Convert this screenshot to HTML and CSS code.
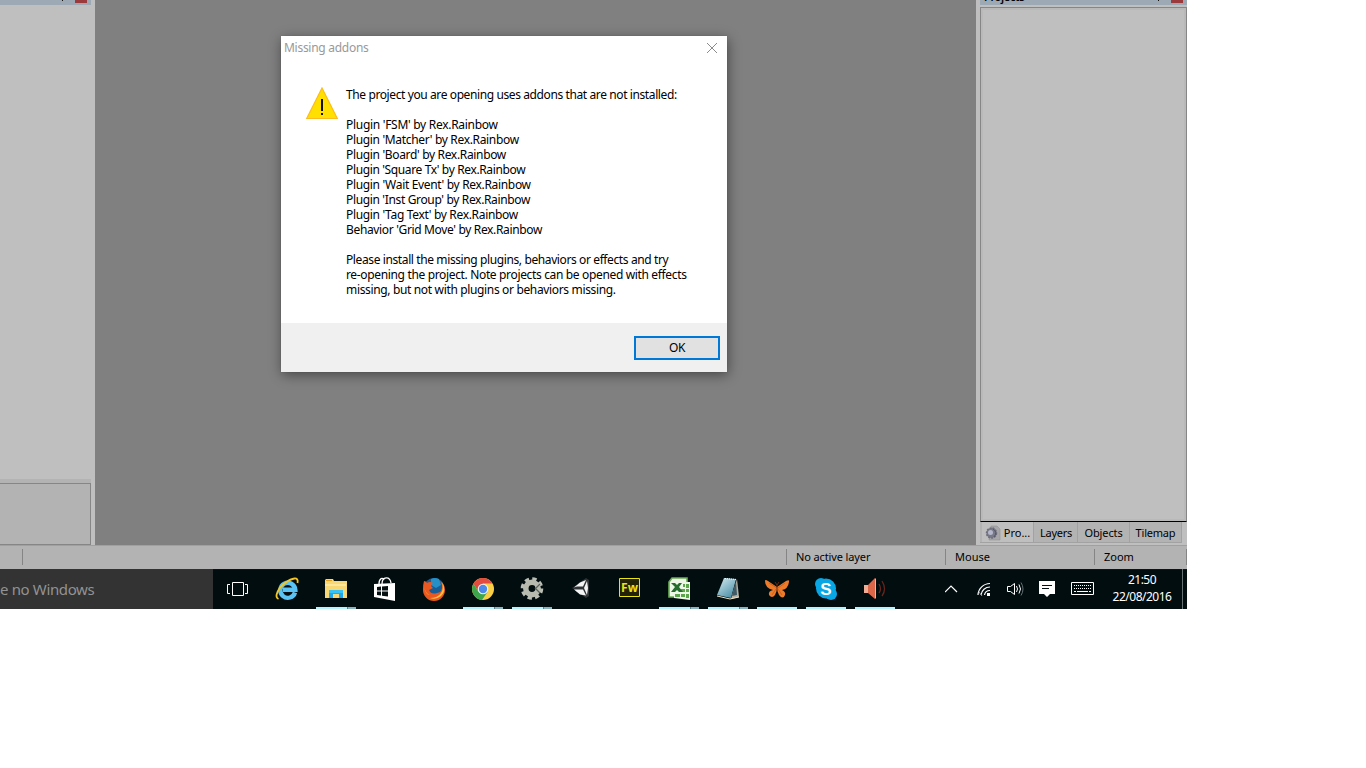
FILE: index.html
```
<!DOCTYPE html>
<html lang="pt">
<head>
<meta charset="utf-8">
<title>Missing addons</title>
<link rel="stylesheet" href="styles.css">
</head>
<body>
<div class="screen">
  <main class="workspace">
    <aside class="left-dock">
      <div class="dock-title"><i class="pin"></i><i class="dock-close"></i></div>
      <div class="left-list"></div>
      <div class="left-info"></div>
    </aside>
    <section class="canvas">
      <div class="dialog">
        <header class="dialog-title"><span>Missing addons</span>
          <svg width="12" height="12" viewBox="0 0 12 12"><path d="M1 1L11 11M11 1L1 11" stroke="#8c8c8c" fill="none"/></svg>
        </header>
        <div class="dialog-body">
          <svg class="warning" width="32" height="33" viewBox="0 0 32 33"><path d="M16 1L31.3 31.5H.7Z" fill="#ffe000" stroke="#fdbb20" stroke-width="1.2"/><path d="M15 12h2v12h-2zM15 26h2v2h-2z" fill="#111"/></svg>
          <div class="message">
            <p><span class="l1">The project you are opening uses addons that are not installed:</span></p>
            <p class="list"><span class="l2">Plugin 'FSM' by Rex.Rainbow</span><span class="l3">Plugin 'Matcher' by Rex.Rainbow</span><span class="l4">Plugin 'Board' by Rex.Rainbow</span><span class="l5">Plugin 'Square Tx' by Rex.Rainbow</span><span class="l6">Plugin 'Wait Event' by Rex.Rainbow</span><span class="l7">Plugin 'Inst Group' by Rex.Rainbow</span><span class="l8">Plugin 'Tag Text' by Rex.Rainbow</span><span class="l9">Behavior 'Grid Move' by Rex.Rainbow</span></p>
            <p><span class="l10">Please install the missing plugins, behaviors or effects and try</span><span class="l11">re-opening the project. Note projects can be opened with effects</span><span class="l12">missing, but not with plugins or behaviors missing.</span></p>
          </div>
        </div>
        <footer class="dialog-footer"><button class="ok">OK</button></footer>
      </div>
    </section>
    <aside class="right-dock">
      <div class="dock-title"><span class="dock-name">Projects</span><i class="pin"></i><i class="dock-close"></i></div>
      <div class="tree"></div>
      <nav class="tabs">
        <span class="tab active"><svg width="16" height="16" viewBox="0 0 16 16"><path d="M6 1h6l3 3v11H4z" fill="#a7a7a9" stroke="#929296" stroke-width=".6"/><circle cx="6.500" cy="8" r="5" fill="#777987" stroke="#6d6d7c" stroke-dasharray="2 1" stroke-width="1.500"/><circle cx="5.500" cy="7.500" r="2.500" fill="#b5b7cb"/><path d="M8 4q5 3 1 8" stroke="#56566a" fill="none"/></svg><b>Pro...</b></span>
        <span class="tab layers">Layers</span><span class="tab objects">Objects</span><span class="tab tilemap">Tilemap</span>
      </nav>
    </aside>
  </main>
  <div class="status">
    <span class="cell s0"></span><span class="cell s1"></span><span class="cell s2">No active layer</span><span class="cell s3">Mouse</span><span class="cell s4">Zoom</span>
  </div>
  <footer class="taskbar">
    <div class="search">e no Windows</div>
    <div class="apps">
      <div class="app"><svg viewBox="0 0 24 24"><path d="M6.500 5.500h11v13h-11zM4 7.500H1.500v9H4M19 7.500h2.500v9H19" fill="none" stroke="#fff"/></svg></div>
      <div class="app"><svg viewBox="0 0 24 24"><path d="M20 15.500A7.500 7.500 0 1 1 20.300 12.700H8" fill="none" stroke="#5bc3f3" stroke-width="4.400"/><path d="M3.500 22C-1 20 3 11 10 6S24-1 22.500 6" fill="none" stroke="#f5c623" stroke-width="1.800"/></svg></div>
      <div class="app on multi"><svg viewBox="0 0 24 24"><path d="M1 3l1-1h7l1 2h13v17H1z" fill="#f8d775"/><path d="M2 3h6v1H2z" fill="#e99d17"/><path d="M1 7h21v2H1z" fill="#ffe69b"/><path d="M5 21v-8h14v8h-4v-4H9v4z" fill="#1fa7e8"/><path d="M5 13h14v3H5z" fill="#37c3f5"/></svg></div>
      <div class="app"><svg viewBox="0 0 24 24"><path d="M1 7l21-1v18L1 20z" fill="#fff"/><path d="M6 7C6 1 10 0 11 3M9 7C9-1 17-1 18 6" fill="none" stroke="#fff" stroke-width="1.300"/><path d="M4 10l4-.4v4H4zM9 9.500l6-.6v4.700H9zM4 14.600h4v4L4 18zM9 14.600h6v5l-6-.8z" fill="#061013"/></svg></div>
      <div class="app"><svg viewBox="0 0 24 24"><circle cx="12" cy="11.500" r="10.500" fill="#175d98"/><path d="M9 2q4-2 8 0l2 6-5 3-5-3z" fill="#258fc7"/><path d="M2 4q2 0 3 2 3-2 6 0l-2 3 2 2-4 2q2 5 8 3 6-1 5-8l-2-4q5 3 5 9a11 11 0 0 1-22 0Q1 7 2 4" fill="#e95821"/><path d="M20 5q5 9-1 14-5 4-11 2 8 0 11-5 3-4 1-11" fill="#ffc33d"/><path d="M2 9q1 7 6 9-5 0-6-9" fill="#f7912a"/></svg></div>
      <div class="app on multi"><svg viewBox="0 0 24 24"><circle cx="12" cy="12" r="11" fill="#fbcf45"/><path d="M2.500 6.500A11 11 0 0 1 21.500 6.500H12L7.300 14.800z" fill="#e34b40"/><path d="M2.500 6.500A11 11 0 0 0 11 23l5.700-8.300-9.400.1z" fill="#3da64c"/><circle cx="12" cy="12" r="5.300" fill="#eef4f5"/><circle cx="12" cy="12" r="4.200" fill="#4c89e9"/></svg></div>
      <div class="app on multi"><svg viewBox="0 0 24 24"><circle cx="12" cy="11.500" r="9.300" fill="none" stroke="#bbbeb4" stroke-width="4" stroke-dasharray="4.200 3.100"/><circle cx="12" cy="11.500" r="6.200" fill="none" stroke="#b7baae" stroke-width="5.500"/><path d="M15 12l5-5M16 12l4 4" stroke="#596059" stroke-width="1.200"/></svg></div>
      <div class="app"><svg viewBox="0 0 24 24"><path d="M3 11L17 1l3 2v16l-3 2z" fill="#303335"/><path d="M5 10.500l6-5 6-2.500-3 6.500H8zM5 12.500h9l3 6-6-1zM18 4l1 7-1 7-3-7z" fill="#f4f4f4"/></svg></div>
      <div class="app"><svg viewBox="0 0 24 24"><path d="M1.500 1.500h20v18h-20z" fill="#242206" stroke="#e8e315"/><text x="11.500" y="15" text-anchor="middle" class="fw">Fw</text></svg></div>
      <div class="app on multi"><svg viewBox="0 0 24 24"><path d="M5 1h15v19H2V5z" fill="#eef6e8" stroke="#69ad53" stroke-width="1.600"/><path d="M12 5h11v18l-16-2v-5h5z" fill="#edf6e7"/><path d="M16 7h2v3h-2zM19 7h3v4h-3zM14 12h4v3h-4zM19 12h3v3h-3zM8 17h5v3H8zM14 17h4v3h-4zM19 17h3v4h-3z" fill="#5ba54b"/><path d="M4 6l4 4-4 5h4l2-2 2 2h4l-4-5 3-4h-3l-2 2-2-2z" fill="#246d2d"/></svg></div>
      <div class="app on multi"><svg viewBox="0 0 24 24"><defs><linearGradient id="page" x2=".7" y2="1"><stop stop-color="#d7edf0"/><stop offset="1" stop-color="#4d91a9"/></linearGradient></defs><path d="M21 2l2 18-8 2z" fill="#b7afa0"/><path d="M8 1l12 1-5 19-14-3z" fill="url(#page)"/><path d="M20 4l-4 15 5-1z" fill="#405b66"/><path d="M9 1.500l12 1" stroke="#fff" stroke-dasharray="1 1"/><path d="M1 19l13 3 9-2" stroke="#eee4c9" fill="none"/></svg></div>
      <div class="app on"><svg viewBox="0 0 24 24"><path d="M12 10L3 4Q0 2 0 4q0 7 8 9-5 1-4 5 3 4 6 0l2-5 2 5q4 5 6 0 1-3-3-5 6-1 7-8 1-3-3-1z" fill="#ed7b2a"/><path d="M12 11L4 6M11 12l-4 6M13 11l7-5M13 12l4 6" stroke="#b8511c" stroke-width=".6"/><path d="M12 7v7M12 8l-2-3M12 8l2-3" stroke="#69270e" fill="none"/></svg></div>
      <div class="app on"><svg viewBox="0 0 24 24"><circle cx="12" cy="11.500" r="10" fill="#08a6e4"/><circle cx="7" cy="7" r="6" fill="#08a6e4"/><circle cx="17" cy="17" r="6" fill="#08a6e4"/><text x="12" y="17.500" text-anchor="middle" class="skype">S</text></svg></div>
      <div class="app on"><svg viewBox="0 0 24 24"><path d="M1 8h4l7-7v21l-7-6H1z" fill="#db6748"/><path d="M1 8h4v8H1z" fill="#efad96"/><path d="M12 1l1 1v19l-1 1z" fill="#f4b198"/><path d="M16 7q3 5 0 9M19 4q5 8 0 15" fill="none" stroke="#67261b" stroke-width="1.300"/></svg></div>
    </div>
    <div class="tray">
      <svg width="155" height="40" viewBox="0 0 155 40" fill="none" stroke="#fff">
        <path d="M0 23l6-6 6 6" stroke-width="1.200"/>
        <path d="M33 26A12 12 0 0 1 45 14.500M36 26A9 9 0 0 1 45 18M39.500 26A5.500 5.500 0 0 1 45 21.500" stroke-width="1.200"/><path d="M42 24h3v3h-3z" fill="#fff" stroke="none"/><path d="M34 23l3 4" stroke="#8f9899"/>
        <path d="M62.500 17.500h3l4-3v11l-4-3h-3zM71.500 17q2 3 0 6M74 15.500q3 4.500 0 9"/><path d="M76 13.500q4 6.500 0 13" stroke="#647073"/>
        <path d="M94 12h16v13h-5l-3 3-3-3h-5z" fill="#fff" stroke="none"/><path d="M97 16.500h10M97 19.500h7" stroke="#061013"/>
        <path d="M126.500 13.500h22v12h-22z"/><path d="M129 16.500h18M129 19.500h18" stroke-dasharray="1 1"/><path d="M129 22.500h2M132 22.500h11M144 22.500h2"/>
      </svg>
      <div class="clock"><span>21:50</span><span>22/08/2016</span></div>
      <i class="show-desktop"></i>
    </div>
  </footer>
</div>
</body>
</html>
```
FILE: styles.css
```
* { box-sizing: border-box; }
body { margin: 0; background: #fff; color: #000; font: 12px/15px "Noto Sans", "Open Sans", sans-serif; }
.screen { width: 1187px; height: 609px; overflow: hidden; background: #b3b3b3; }
.workspace { display: grid; grid-template-columns: 95px 881px 211px; height: 545px; }
.left-dock { display: flex; flex-direction: column; background: #bfbfbf; padding-right: 4px; }
.dock-title { display: flex; height: 5px; flex: none; background: #9da9b5; overflow: hidden; justify-content: flex-end; }
.pin { width: 1px; height: 1px; background: #111; margin-right: 12px; }
.dock-close { width: 12px; height: 3px; background: #9b3a3d; margin-right: 4px; }
.left-list { height: 478px; }
.left-info { flex: 1; border: 1px solid #868686; border-left: 0; background: #b3b3b3; box-shadow: 0 -4px #b3b3b3; }
.canvas { background: #808080; padding: 36px 0 0 186px; }
.dialog { width: 446px; height: 336px; background: #fff; box-shadow: 1px 3px 12px rgba(0,0,0,.45), 0 0 1px rgba(0,0,0,.2); display: flex; flex-direction: column; }
.dialog-title { height: 32px; display: flex; justify-content: space-between; padding: 4px 9px 0 3px; color: #999; }
.dialog-title span { letter-spacing: -.28px; }
.dialog-title svg { margin-top: 2px; }
.dialog-body { flex: 1; display: flex; padding: 19px 0 0 25px; }
.warning { margin-right: 8px; }
.message p { margin: 0 0 15px; }
.message span { display: block; white-space: nowrap; width: max-content; }
.l1 { letter-spacing: -.395px; }
.l2 { letter-spacing: -.29px; }
.l3, .l4 { letter-spacing: -.335px; }
.l5 { letter-spacing: -.365px; }
.l6, .l8 { letter-spacing: -.325px; }
.l7, .l9 { letter-spacing: -.345px; }
.l10 { letter-spacing: -.39px; }
.l11, .l12 { letter-spacing: -.345px; }
.dialog-footer { height: 49px; background: #f0f0f0; display: flex; justify-content: flex-end; padding: 13px 7px; }
.ok { width: 86px; height: 24px; border: 2px solid #0078d7; background: #e1e1e1; padding: 0 0 2px; font: inherit; letter-spacing: -.3px; color: #000; }
.right-dock { background: #bfbfbf; padding-left: 4px; display: flex; flex-direction: column; }
.dock-name { flex: 1; padding-left: 4px; margin-top: -11px; font-weight: 600; letter-spacing: -.35px; font-size: 11px; }
.tree { height: 515px; margin-top: 2px; border: 1px solid #868686; border-bottom-color: #000; box-shadow: inset 0 0 0 2px #b9b9b9; }
.tabs { display: flex; height: 21px; background: #b3b3b3; border-bottom: 1px solid #a2a2a2; padding-left: 2px; margin-right: 5px; }
.tab { display: flex; align-items: center; justify-content: center; border-right: 1px solid #a2a2a2; font-size: 11px; padding-top: 1px; }
.tab b { font-weight: 400; }
.active { width: 52px; gap: 3px; background: #bfbfbf; }
.layers { width: 44px; letter-spacing: -.3px; padding-left: 1px; }
.objects { width: 52px; letter-spacing: -.1px; }
.tilemap { width: 52px; letter-spacing: -.2px; }
.status { height: 24px; border-top: 1px solid #a0a0a0; background: #b3b3b3; display: flex; padding-top: 3px; font-size: 11px; line-height: 16px; }
.cell { height: 16px; border-right: 1px solid #858585; padding-left: 9px; white-space: nowrap; }
.s0 { width: 23px; }
.s1 { width: 764px; }
.s2 { width: 159px; letter-spacing: -.12px; }
.s3 { width: 149px; }
.s4 { width: 92px; }
.taskbar { display: flex; height: 40px; background: #020d10; border-top: 1px solid #061719; }
.search { width: 213px; height: 40px; margin-top: -1px; background: #333; color: #929292; font-size: 15px; letter-spacing: -.36px; line-height: 41px; white-space: nowrap; }
.apps { display: flex; margin-top: -1px; width: 732px; }
.app { width: 49px; height: 40px; padding: 8px 0 0 13px; flex: none; }
.app svg { display: block; width: 24px; height: 24px; overflow: visible; }
.on::after { content: ""; display: block; width: 40px; height: 2px; margin: 6px 0 0 -8px; background: #b5f3ff; }
.multi::after { background: linear-gradient(90deg, #b5f3ff 31px, #56808a 31px 32px, #89b6c1 32px); }
.fw { font: bold 12px "Open Sans", sans-serif; fill: #e8e315; }
.skype { font: bold 17px "Liberation Sans", sans-serif; fill: #fff; }
.tray { display: flex; width: 242px; margin-top: -1px; }
.tray svg { flex: none; }
.clock { width: 82px; display: flex; flex-direction: column; text-align: center; color: #fff; line-height: 17px; letter-spacing: -.5px; padding: 2px 0 0 2px; }
.show-desktop { width: 5px; border-left: 1px solid #657173; }
```
